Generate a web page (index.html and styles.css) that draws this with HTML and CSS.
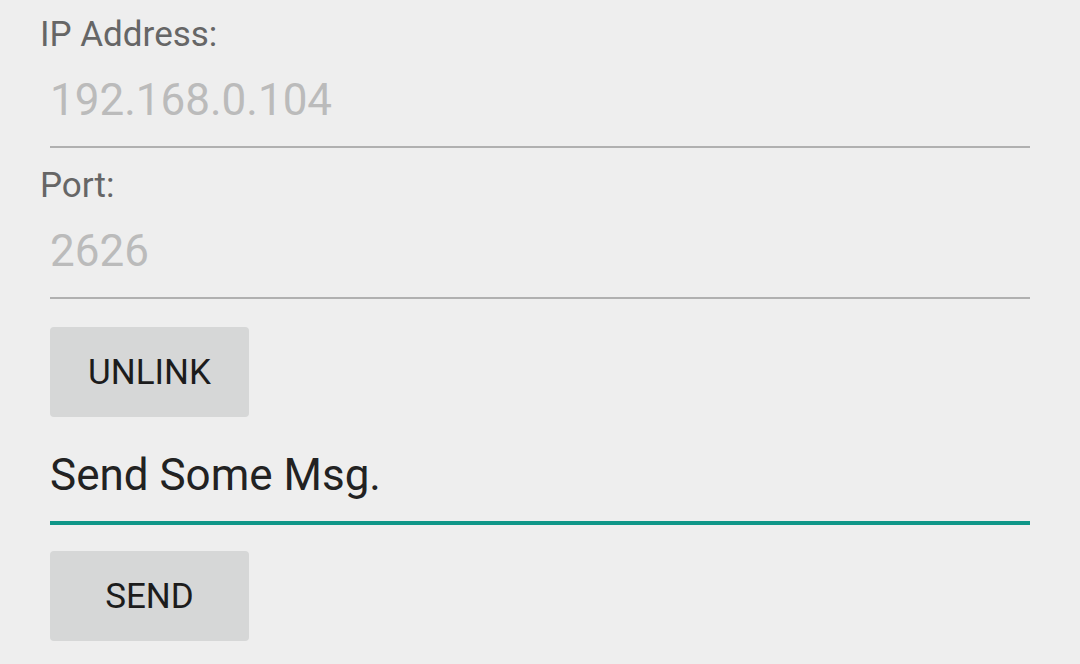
FILE: index.html
```html
<!DOCTYPE html>
<html lang="en">
<head>
<meta charset="utf-8">
<title>Socket Client</title>
<link rel="stylesheet" href="styles.css">
</head>
<body>
<main class="screen">
  <label class="label" for="ip">IP Address:</label>
  <input class="field" id="ip" type="text" placeholder="192.168.0.104">
  <label class="label label-port" for="port">Port:</label>
  <input class="field" id="port" type="text" placeholder="2626">
  <button class="btn btn-unlink" type="button">UNLINK</button>
  <input class="field field-focus" id="msg" type="text" value="Send Some Msg.">
  <button class="btn btn-send" type="button">SEND</button>
</main>
</body>
</html>
```

FILE: styles.css
```css
html, body {
  margin: 0;
  padding: 0;
  background: #eeeeee;
}

body {
  font-family: Roboto, "Noto Sans", "Liberation Sans", sans-serif;
  width: 1080px;
  height: 664px;
  overflow: hidden;
}

.screen {
  display: flex;
  flex-direction: column;
  align-items: flex-start;
  padding: 13px 40px 0 40px;
}

.label {
  display: block;
  font-size: 35px;
  line-height: 44px;
  height: 42px;
  color: #666666;
}

.label-port {
  margin-top: 16px;
}

.field {
  box-sizing: content-box;
  align-self: stretch;
  margin: 0 10px;
  padding: 18px 0 19px 0;
  height: 54px;
  line-height: 54px;
  font-family: inherit;
  font-size: 44px;
  color: #222222;
  background: transparent;
  border: 0;
  border-bottom: 2px solid #b0b0b0;
  border-radius: 0;
  outline: none;
}

.field::placeholder {
  color: #bbbbbb;
  opacity: 1;
}

.field-focus {
  margin-top: 13px;
  border-bottom: 4px solid #0f9688;
}

.btn {
  box-sizing: border-box;
  width: 199px;
  height: 90px;
  margin-left: 10px;
  padding: 0;
  border: 0;
  border-radius: 4px;
  background: #d6d7d7;
  font-family: inherit;
  font-size: 35px;
  color: #1c1c1c;
}

.btn-unlink {
  margin-top: 28px;
}

.btn-send {
  margin-top: 26px;
}
```
